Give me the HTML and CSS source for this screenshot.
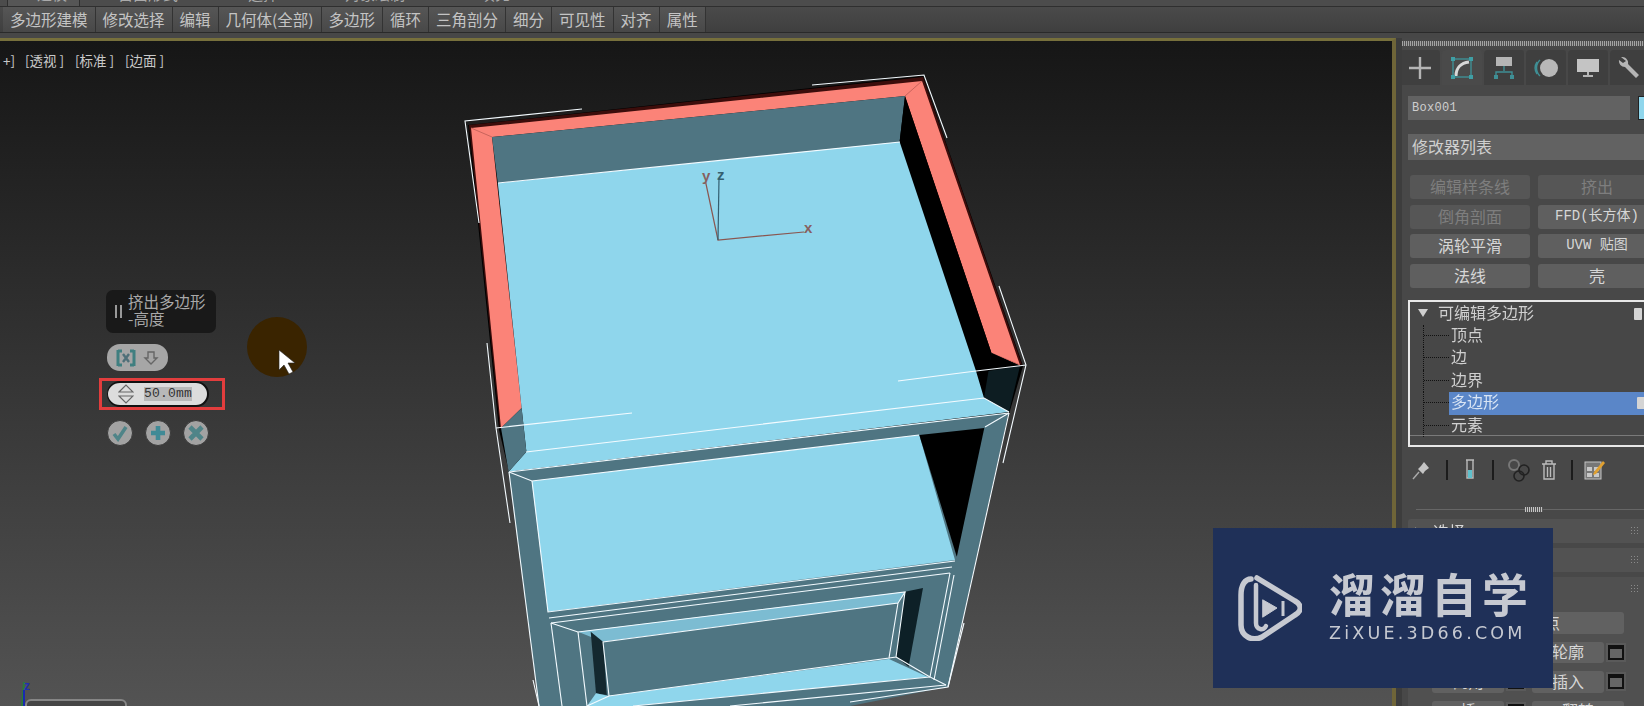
FILE: index.html
```html
<!DOCTYPE html>
<html lang="zh">
<head>
<meta charset="utf-8">
<title>3ds Max</title>
<link rel="stylesheet" href="styles.css">
</head>
<body>
<div class="app">
  <header class="top">
    <nav class="tabs-row">
      <span class="rtab rtab-on">建模</span><span class="rtab rtab-b">自由形式</span><span class="rtab rtab-c">选择</span><span class="rtab rtab-d">对象绘制</span><span class="rtab rtab-e">填充</span>
    </nav>
    <div class="ribbon">
      <button class="rb">多边形建模</button><button class="rb">修改选择</button><button class="rb">编辑</button><button class="rb">几何体(全部)</button><button class="rb">多边形</button><button class="rb">循环</button><button class="rb">三角剖分</button><button class="rb">细分</button><button class="rb">可见性</button><button class="rb">对齐</button><button class="rb">属性</button>
    </div>
  </header>
  <main class="work">
    <section class="viewport">
      <div class="vp-label"><span class="vp-a">+]</span><span class="vp-b">[透视 ]</span><span class="vp-b">[标准 ]</span><span class="vp-b">[边面 ]</span></div>
      <svg class="scene" viewBox="0 41 1392 665" width="1392" height="665">
        <polygon fill="#000" points="468,125 923,76 1023,366 1009,414 509,472 499,430"/>
        <polygon fill="#3c0d0b" points="469,125 923,77 1022,365 992,353 905,96 492,137 522,408 500,429"/>
        <polygon fill="#fb8378" points="471,128 922,81 1020,365 991.5,353 905,96 492,137 521.6,408 501,428"/>
        <g class="mitre">
          <line x1="471" y1="128" x2="492" y2="137"/>
          <line x1="922" y1="81" x2="905" y2="96"/>
          <line x1="1020" y1="365" x2="991.5" y2="353"/>
        </g>
        <polygon fill="#4f7582" points="492,137 905,96 899.6,141.7 497.8,183"/>
        <polygon fill="#000" points="905,96 991.5,353 984,398 976,371 899.6,141.7"/>
        <polygon fill="#0d1d22" points="991.5,353 1020,366 1009,412 984,398"/>
        <polygon fill="#000" points="991.5,353 1020,366 988,371"/>
        <polygon fill="#8fd6ec" points="497.8,183 899.6,141.7 976,371 984,398 1009,412 508.6,471.7 526.4,451.7 521.6,408"/>
        <polygon fill="#4f7582" points="501,428 521.6,408 526.4,451.7 508.6,471.7"/>
        <polygon fill="#4f7582" points="508.6,471.7 1008.6,412.7 947.9,686.7 850,706 539,706"/>
        <polygon fill="#8fd6ec" points="531.8,481 919.3,435 955,560 547.9,611.7"/>
        <polygon fill="#000" points="919.3,435 984.3,428 956.8,556.7"/>
        <polygon fill="#4f7582" points="551.4,623 949.6,573 930,676.7 946,685 850,701 800,706 560,706"/>
        <polygon fill="#7cbcd2" points="578,631.7 905,591.7 897.9,603.3 603,641.7"/>
        <polygon fill="#0d2027" points="905,591.7 923,588 908.6,666.7 896,656.7"/>
        <polygon fill="#4f7582" points="603,641.7 897.9,603.3 889,658 608.6,696"/>
        <polygon fill="#14282f" points="590.7,631.7 603,641.7 606.8,695 596,693.3"/>
        <polygon fill="#8fd6ec" points="608.6,696 889,659 928,677 633,706 587,706 596,693.3"/>
        <g class="wire">
          <polyline points="582,109 465,121 479,223"/>
          <polyline points="812,85 924,75 947,138"/>
          <polyline points="999,286 1026,365 1003,463"/>
          <polyline points="898,381 976,371 1026,365"/>
          <polyline points="487,343 496,428 510,523"/>
          <polyline points="496,428 632,413"/>
          <polyline points="498,183 900,142"/>
          <polyline points="526,452 984,398 1009,412"/>
          <polyline points="509,472 1009,413"/>
          <polyline points="509,472 532,481 919,435"/>
          <polyline points="509,472 539,706"/>
          <polyline points="532,481 548,612 955,561"/>
          <polyline points="551,623 950,573"/>
          <polyline points="549,618 952,567"/>
          <polyline points="551,623 562,706"/>
          <polyline points="950,573 930,677 946,685"/>
          <polyline points="954,575 934,680"/>
          <polyline points="1009,413 948,687 850,702"/>
          <polyline points="551,623 578,632 905,592 898,603 603,642 609,696 889,658 898,603"/>
          <polyline points="578,632 587,706"/>
          <polyline points="609,696 587,706"/>
          <polyline points="889,658 896,657 905,592"/>
          <polyline points="896,657 930,677"/>
          <polyline points="930,677 633,706"/>
          <polyline points="946,685 730,706"/>
          <polyline points="964,623 948,687"/>
          <polyline points="533,680 539,706"/>
          <polyline points="985,427 1009,413"/>
        </g>
        <polyline class="axis-red" points="705.6,182 718,240 804,232"/>
        <line class="axis-blue" x1="719" y1="178" x2="718" y2="240"/>
        <text class="ax ax-red" x="702" y="181">y</text>
        <text class="ax ax-blue" x="717" y="180">z</text>
        <text class="ax ax-red" x="804" y="233">x</text>
        <circle cx="277" cy="347" r="30" fill="#3a2400"/>
        <polygon fill="#fff" stroke="#222" stroke-width=".6" points="279,350 279,370 284,365 289,374 293,372 288,363 295,363"/>
        <line x1="22" y1="706" x2="24" y2="682" stroke="#2a7a3a" stroke-width="2"/>
        <line x1="24" y1="706" x2="24" y2="690" stroke="#1a2ab0" stroke-width="2"/>
        <text class="ax ax-z" x="24" y="690">z</text>
      </svg>
      <div class="mini"></div>

      <div class="caddy">
        <div class="c-title"><span class="c-grip"></span><span class="c-text">挤出多边形<br>-高度</span></div>
        <div class="c-pill">
          <svg width="20" height="18" viewBox="0 0 20 18"><path d="M2 1v16M18 1v16M2 2h4M2 16h4M14 2h4M14 16h4" stroke="#3f7f80" stroke-width="3" fill="none"/><path d="M7 5l6 8M13 5l-6 8" stroke="#4f6f78" stroke-width="2.400"/></svg>
          <svg width="16" height="16" viewBox="0 0 16 16"><path d="M5 2h6v6h3l-6 6-6-6h3z" fill="none" stroke="#666" stroke-width="1.400"/></svg>
        </div>
        <div class="c-redbox">
          <div class="c-input">
            <svg width="16" height="22" viewBox="0 0 16 22"><path d="M1 9l7-7 7 7zM1 13l7 7 7-7z" fill="none" stroke="#666" stroke-width="1.200"/></svg>
            <span class="c-val">50.0mm</span>
          </div>
        </div>
        <div class="c-actions">
          <span class="c-round"><svg width="18" height="18" viewBox="0 0 18 18"><path d="M3 10l4 5L15 3" fill="none" stroke="#4f8488" stroke-width="3.600"/></svg></span>
          <span class="c-round"><svg width="18" height="18" viewBox="0 0 18 18"><path d="M9 2v14M2 9h14" fill="none" stroke="#3f8a96" stroke-width="4.600"/></svg></span>
          <span class="c-round"><svg width="18" height="18" viewBox="0 0 18 18"><path d="M3 3l12 12M15 3L3 15" fill="none" stroke="#4f8488" stroke-width="4.600"/></svg></span>
        </div>
      </div>
    </section>

    <aside class="panel">
      <div class="dots"></div>
      <div class="ptabs">
        <span class="ptab"><svg width="24" height="24" viewBox="0 0 24 24"><path d="M12 1v22M1 12h22" stroke="#b5b5b5" stroke-width="2.400"/></svg></span>
        <span class="ptab ptab-on"><svg width="24" height="24" viewBox="0 0 24 24"><rect x="3" y="3" width="18" height="18" fill="none" stroke="#3f8f95" stroke-width="1.400"/><path d="M6 20c0-8 5-13 13-14" fill="none" stroke="#d8d8d8" stroke-width="3"/><path d="M1 1h4v4H1zM19 1h4v4h-4zM1 19h4v4H1zM19 19h4v4h-4z" fill="#3f9fa5"/></svg></span>
        <span class="ptab"><svg width="24" height="24" viewBox="0 0 24 24"><rect x="4" y="1" width="16" height="9" fill="#b5b5b5"/><path d="M12 10v5M4 20v-4h16v4" fill="none" stroke="#3f8f95" stroke-width="1.400"/><path d="M2 19h4v4H2zM18 19h4v4h-4z" fill="#3f8f95"/></svg></span>
        <span class="ptab"><svg width="26" height="24" viewBox="0 0 26 24"><circle cx="16" cy="12" r="9" fill="#b8b8b8"/><path d="M7 4a11 11 0 0 0 0 16M4 6a11 11 0 0 0 0 12" fill="none" stroke="#3f8f95" stroke-width="1.400"/></svg></span>
        <span class="ptab"><svg width="24" height="24" viewBox="0 0 24 24"><rect x="1" y="3" width="22" height="13" fill="#c4c4c4"/><path d="M11 16h2v3h-2zM7 19h10v2H7z" fill="#b5b5b5"/></svg></span>
        <span class="ptab"><svg width="24" height="24" viewBox="0 0 24 24"><path d="M3 1a6 6 0 0 1 7 7l11 11-3 3L7 11A6 6 0 0 1 1 4l4 3 3-2z" fill="#b5b5b5"/></svg></span>
      </div>
      <div class="name-row"><span class="name">Box001</span><span class="swatch"></span></div>
      <div class="modlist">修改器列表</div>
      <div class="mods">
        <button class="mb off">编辑样条线</button><button class="mb off">挤出</button>
        <button class="mb off">倒角剖面</button><button class="mb mono">FFD(长方体)</button>
        <button class="mb">涡轮平滑</button><button class="mb mono">UVW 贴图</button>
        <button class="mb">法线</button><button class="mb">壳</button>
      </div>
      <div class="stack">
        <div class="st-head"><span class="st-tri"></span><span>可编辑多边形</span><span class="bulb"></span></div>
        <div class="st-row"><i class="st-l"></i><span class="st-t">顶点</span></div>
        <div class="st-row"><i class="st-l"></i><span class="st-t">边</span></div>
        <div class="st-row"><i class="st-l"></i><span class="st-t">边界</span></div>
        <div class="st-row"><i class="st-l"></i><span class="st-t st-sel">多边形<span class="bulb"></span></span></div>
        <div class="st-row"><i class="st-l"></i><span class="st-t">元素</span></div>
        <div class="st-end"></div>
      </div>
      <div class="tools">
        <span class="ti ti-pin"><svg width="20" height="20" viewBox="0 0 20 20"><path d="M1 19l6-7" stroke="#aaa" stroke-width="1.400"/><path d="M6 9l5 5 2-3 4-3-5-6-3 4z" fill="#c4c4c4"/></svg></span>
        <i class="t-sep"></i>
        <span class="ti"><svg width="12" height="22" viewBox="0 0 12 22"><path d="M2 1h8M3 1v18h6V1" fill="none" stroke="#bbb" stroke-width="1.400"/><rect x="4" y="11" width="4" height="8" fill="#5fc0cc"/></svg></span>
        <i class="t-sep"></i>
        <span class="ti ti-wide"><svg width="24" height="24" viewBox="0 0 24 24" fill="none"><circle cx="7" cy="7" r="5" stroke="#777" stroke-width="2"/><circle cx="17" cy="12" r="5" stroke="#222" stroke-width="1.600"/><circle cx="12" cy="18" r="5" stroke="#222" stroke-width="1.600"/></svg></span>
        <span class="ti ti-trash"><svg width="16" height="22" viewBox="0 0 16 22" fill="none" stroke="#bbb" stroke-width="1.400"><path d="M1 5h14M5 5V2h6v3M3 5v15h10V5M6.500 8v10M9.500 8v10"/></svg></span>
        <i class="t-sep"></i>
        <span class="ti"><svg width="22" height="22" viewBox="0 0 22 22"><rect x="1" y="3" width="16" height="17" fill="#777" stroke="#c4c4c4"/><path d="M3 8h5v4H3zM10 8h5v4h-5zM3 14h5v4H3zM10 14h5v4h-5z" fill="#c8c8c8"/><path d="M10 13l9-11 2 2-9 11-3 1z" fill="#e0a030"/></svg></span>
      </div>
      <div class="split"><span class="split-grip"></span></div>
      <div class="roll"><span class="r-tri"></span><span class="r-name">选择</span><span class="r-grip"></span></div>
      <div class="roll"><span class="r-tri"></span><span class="r-name">软选择</span><span class="r-grip"></span></div>
      <div class="roll roll-open">
        <div class="roll-head"><span class="r-tri"></span><span class="r-name">编辑多边形</span><span class="r-grip"></span></div>
        <div class="roll-body">
          <button class="eb eb-full">插入顶点</button>
          <div class="eb-row"><button class="eb">挤出</button><span class="eb-box"></span><button class="eb">轮廓</button><span class="eb-box"></span></div>
          <div class="eb-row"><button class="eb">倒角</button><span class="eb-box"></span><button class="eb">插入</button><span class="eb-box"></span></div>
          <div class="eb-row"><button class="eb">桥</button><span class="eb-box"></span><button class="eb eb-wide">翻转</button></div>
        </div>
      </div>
    </aside>
  </main>

  <div class="logo">
    <svg class="logo-ic" width="64" height="66" viewBox="0 0 64 66" fill="none" stroke="#c6c9d1" stroke-width="5.500" stroke-linecap="round" stroke-linejoin="round">
      <path d="M19 3l38 23c7 4 7 10 0 14L24 62c-10 5-21-1-21-12V20C3 10 7 4 13 4"/>
      <path d="M18 10v38c0 7 8 8 10 3" stroke-width="4.500"/>
      <path d="M25 25l14 8-14 9z" fill="#c6c9d1" stroke-width="1"/>
      <path d="M45 26v15" stroke-width="3" stroke-linecap="butt"/>
    </svg>
    <div class="logo-txt">
      <div class="logo-cn">溜溜自学</div>
      <div class="logo-en">ZiXUE.3D66.COM</div>
    </div>
  </div>
</div>
</body>
</html>
```

FILE: styles.css
```css
* { box-sizing: border-box; }
html, body { margin: 0; padding: 0; }
body { width: 1644px; height: 706px; overflow: hidden; background: #444; font-family: "Noto Sans CJK SC", "Liberation Sans", sans-serif; }
button { font-family: inherit; margin: 0; }
.app { position: relative; width: 1644px; height: 706px; overflow: hidden; display: flex; flex-direction: column; filter: blur(.4px); }

/* top */
.top { height: 38px; flex: none; background: #474747; }
.tabs-row { height: 7px; overflow: hidden; display: flex; align-items: flex-end; background: #4c4c4c; border-bottom: 1px solid #2f2f2f; color: #aaa; font-size: 15px; line-height: 18px; }
.rtab { flex: none; height: 6px; display: flex; align-items: flex-end; padding-bottom: 3px; white-space: nowrap; }
.rtab-on { width: 73px; margin-left: 7px; padding-left: 29px; background: #565656; border-right: 1px solid #2f2f2f; border-left: 1px solid #2f2f2f; }
.rtab-b { margin-left: 38px; width: 130px; }
.rtab-c { width: 97px; }
.rtab-d { width: 135px; }
.ribbon { height: 26px; display: flex; padding-left: 3px; background: linear-gradient(#4a4a4a, #3f3f3f); border-bottom: 1px solid #2a2a2a; }
.rb { height: 25px; padding: 0 7px; border: 0; border-right: 1px solid #333; background: linear-gradient(#565656, #484848); color: #c4c4c4; font-size: 15.500px; line-height: 23px; white-space: nowrap; }

/* work area */
.work { flex: 1; display: flex; min-height: 0; }
.viewport { position: relative; width: 1396px; flex: none; border-top: 3px solid #77703c; border-right: 4px solid #6f6538; background: linear-gradient(#161616, #535353); overflow: hidden; }
.scene { display: block; }
.wire { fill: none; stroke: #f4fbff; stroke-width: 1.100; }
.mitre line { stroke: #c9645c; stroke-width: 1; }
.axis-red { fill: none; stroke: #8a5650; stroke-width: 1.200; }
.axis-blue { stroke: #335e70; stroke-width: 1.200; }
.ax { font-family: "Liberation Sans", sans-serif; font-size: 15px; font-weight: 700; }
.ax-red { fill: #87605f; }
.ax-blue { fill: #35606f; }
.ax-z { fill: #2030b0; font-size: 12px; }
.vp-label { position: absolute; left: 3px; top: 10px; display: flex; color: #c8c8c8; font-size: 13.500px; line-height: 18px; white-space: nowrap; }
.vp-a { width: 22px; }
.vp-b { width: 50px; }
.mini { position: absolute; left: 25px; top: 658px; width: 102px; height: 20px; border: 2px solid #868686; border-radius: 6px 6px 0 0; background: #454545; }

.caddy { position: absolute; left: 99px; top: 249px; width: 126px; display: flex; flex-direction: column; }
.c-title { width: 110px; height: 43px; margin-left: 7px; display: flex; align-items: center; gap: 6px; padding-left: 9px; border-radius: 7px; background: #191919; color: #a8a8a8; font-size: 15.500px; line-height: 17px; }
.c-grip { width: 7px; height: 13px; border-left: 2px solid #999; border-right: 2px solid #999; flex: none; }
.c-text { white-space: nowrap; margin-top: -3px; }
.c-pill { width: 61px; height: 27px; margin: 11px 0 0 8px; display: flex; align-items: center; justify-content: space-around; padding: 0 5px; border-radius: 13px; background: #a6a6a6; }
.c-redbox { width: 126px; height: 32px; margin-top: 7px; border: 3px solid #e23d3d; padding-left: 5px; display: flex; align-items: center; }
.c-input { width: 102px; height: 26px; display: flex; align-items: center; gap: 10px; padding-left: 10px; border-radius: 13px; background: #dcdcdc; border: 2px solid #111; border-left-width: 1px; }
.c-val { font-family: "Liberation Mono", monospace; font-size: 13px; line-height: 14px; color: #333; background: #b8b8b8; letter-spacing: .2px; }
.c-actions { display: flex; gap: 12px; margin: 10px 0 0 8px; }
.c-round { width: 26px; height: 26px; border-radius: 50%; background: #a2a2a2; border: 1px solid #3a3a3a; display: flex; align-items: center; justify-content: center; }

/* command panel */
.panel { flex: 1; min-width: 0; overflow: hidden; background: #484848; border-left: 6px solid #3d3d3d; padding-left: 6px; }
.dots { height: 5px; margin: 3px 0 0 -6px; background: repeating-linear-gradient(90deg, #bbb 0 1px, #555 1px 2px); opacity: .8; }
.ptabs { display: flex; height: 35px; margin: 4px 0 0 -8px; width: 260px; }
.ptab { width: 42px; flex: none; display: flex; align-items: center; justify-content: center; background: #3f3f3f; border-radius: 4px 4px 0 0; border-right: 2px solid #484848; }
.ptab-on { background: #4a4a4a; }
.name-row { display: flex; gap: 8px; margin-top: 11px; height: 24px; width: 260px; }
.name { width: 222px; background: #626262; color: #cfcfcf; font-family: "Liberation Mono", monospace; font-size: 12px; line-height: 24px; padding-left: 4px; letter-spacing: .3px; }
.swatch { width: 24px; background: #8fd6ec; border: 1px solid #222; }
.modlist { height: 26px; margin-top: 14px; width: 260px; background: #626262; color: #cfcfcf; font-size: 16px; line-height: 25px; padding-left: 4px; }
.mods { display: grid; grid-template-columns: 120px 118px; column-gap: 8px; row-gap: 5.500px; margin: 15px 0 0 2px; width: 260px; }
.mb { height: 24px; padding: 0 0 2px; border: 0; border-radius: 3px; background: #5f5f5f; color: #d6d6d6; font-size: 16px; line-height: 20px; white-space: nowrap; overflow: hidden; }
.mb.off { background: #565656; color: #7e7e7e; }
.mb.mono { font-family: "Liberation Mono", "Noto Sans CJK SC", monospace; font-size: 14px; }

.stack { height: 147px; width: 260px; margin-top: 12.500px; border: 2px solid #e8e8e8; background: #474747; color: #d0d0d0; font-size: 16px; }
.st-head { height: 22.500px; display: flex; align-items: flex-start; padding-left: 28px; position: relative; line-height: 20px; width: 236px; }
.st-tri { position: absolute; left: 8px; top: 7px; width: 0; height: 0; border-left: 5px solid transparent; border-right: 5px solid transparent; border-top: 8px solid #cfcfcf; }
.st-row { height: 22.500px; display: flex; margin-left: 13px; border-left: 1px dotted #111; }
.st-row:last-of-type { border-left-color: #111; }
.st-l { width: 25px; flex: none; height: 11px; border-bottom: 1px dotted #111; }
.st-t { flex: 1; padding-left: 2px; position: relative; line-height: 19px; }
.st-sel { background: #5a86c8; color: #d8e4f4; }
.bulb { position: absolute; top: 6px; left: 224px; width: 8px; height: 12px; background: #d4d4d4; border-radius: 1px; }
.st-sel .bulb { left: 188px; top: 5px; }
.st-end { height: 1px; background: #7a7a7a; margin-top: -2px; }

.tools { display: flex; align-items: center; height: 36px; margin-top: 5px; }
.ti { width: 24px; flex: none; display: flex; align-items: center; justify-content: center; }
.ti-pin { width: 28px; }
.ti-wide { width: 30px; }
.ti-trash { margin-left: 3px; }
.t-sep { width: 2px; height: 20px; background: #1c1c1c; margin: 0 10px; flex: none; }
.split { height: 1px; margin: 21px 0 0 8px; width: 240px; background: #666; display: flex; justify-content: center; align-items: center; }
.split-grip { width: 18px; height: 5px; background: repeating-linear-gradient(90deg, #c4c4c4 0 1px, #555 1px 2px); margin-left: -4px; }

.roll { display: flex; align-items: center; height: 24px; margin-top: 5px; width: 260px; background: #525252; color: #d8d8d8; font-size: 16px; position: relative; border-radius: 3px 3px 0 0; }
.split + .roll { margin-top: 9px; }
.r-tri { width: 0; height: 0; margin: 0 13px 0 7px; border-top: 4px solid transparent; border-bottom: 4px solid transparent; border-left: 5px solid #999; }
.r-name { line-height: 22px; }
.r-grip { position: absolute; left: 222px; top: 7px; width: 10px; height: 10px; background-image: radial-gradient(#8a8a8a 35%, transparent 40%); background-size: 3px 3px; }
.roll-open { display: block; height: 160px; background: #505050; }
.roll-head { display: flex; align-items: center; height: 24px; position: relative; }
.roll-body { padding: 11px 0 0 24px; display: flex; flex-direction: column; gap: 8px; }
.eb { width: 72px; height: 21.500px; padding: 0 0 2px; border: 0; border-radius: 3px; background: #616161; color: #d6d6d6; font-size: 16px; line-height: 18px; white-space: nowrap; }
.eb-full { width: 192px; }
.eb-row { display: flex; align-items: center; }
.eb-box { width: 16px; height: 15px; margin: 0 8px 0 4px; flex: none; border: 2px solid #111; border-top-width: 4px; background: #666; outline: 2px solid #5a5a5a; }
.eb-wide { width: 92px; }

/* watermark */
.logo { position: absolute; left: 1213px; top: 528px; width: 340px; height: 160px; background: #1f3058; display: flex; align-items: center; padding-left: 25px; gap: 27px; color: #c6c9d1; }
.logo-ic { flex: none; }
.logo-txt { display: flex; flex-direction: column; }
.logo-cn { font-size: 46px; font-weight: 700; line-height: 50px; letter-spacing: 5px; white-space: nowrap; margin-top: -8px; }
.logo-en { font-family: "DejaVu Sans", sans-serif; font-size: 17.500px; line-height: 18px; letter-spacing: 3.200px; white-space: nowrap; margin-top: 7px; }
```
